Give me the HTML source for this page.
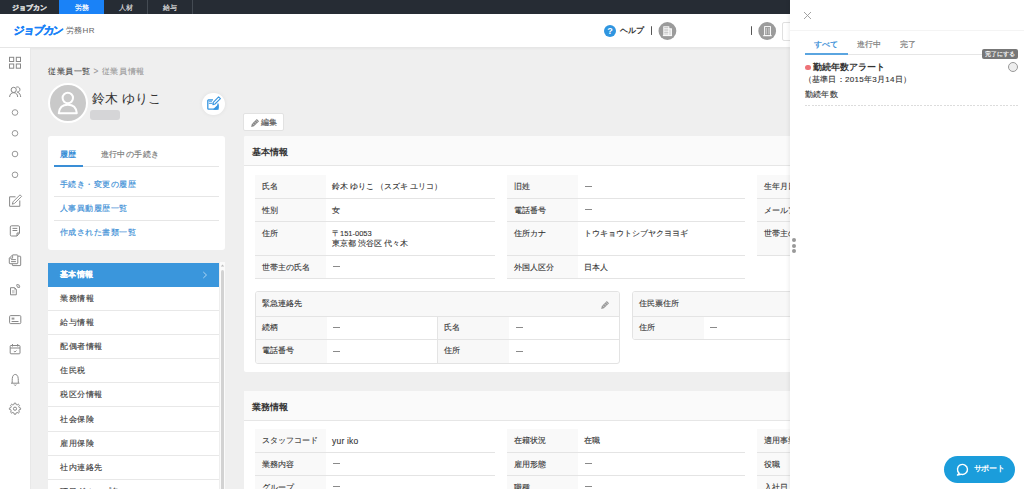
<!DOCTYPE html>
<html><head><meta charset="utf-8"><style>
*{box-sizing:border-box;margin:0;padding:0}
html,body{width:1024px;height:489px;overflow:hidden;background:#efefef;font-family:"Liberation Sans",sans-serif;color:#333}
.a{position:absolute}
.tt{top:0;height:14px;color:#ddd;font-size:7px;line-height:15px;text-align:center;-webkit-text-stroke:0.2px currentColor}
.card{background:#fff;border-radius:3px}
.lnk{color:#3a8ed6;font-size:8px;letter-spacing:0.45px;white-space:nowrap;-webkit-text-stroke:0.15px #3a8ed6}
.nav{left:48px;width:171px;height:24px;background:#fff;border-bottom:1px solid #e8e8e8;font-size:8px;letter-spacing:0.5px;line-height:24px;padding-left:12px;color:#3a3a3a;white-space:nowrap;-webkit-text-stroke:0.12px #3a3a3a}
.t{position:absolute;font-size:7.5px;color:#333;white-space:nowrap;line-height:10px;-webkit-text-stroke:0.1px #333}
.ln{position:absolute;height:1px;background:#e4e4e4}
.lb{position:absolute;background:#f9f9f9}
</style></head><body>
<div class="a" style="left:0;top:0;width:1024px;height:14px;background:#262c34"></div>
<div class="a tt" style="left:0;width:59px;color:#d5d5d5;font-weight:bold;font-size:7px;letter-spacing:-0.1px;-webkit-text-stroke:0.35px #d5d5d5">ジョブカン</div>
<div class="a tt" style="left:59px;width:45px;background:#1a82f7;color:#fff">労務</div>
<div class="a tt" style="left:104px;width:43px">人材</div>
<div class="a" style="left:147px;top:0;width:1px;height:14px;background:#444b53"></div>
<div class="a tt" style="left:148px;width:44px">給与</div>
<div class="a" style="left:192px;top:0;width:1px;height:14px;background:#444b53"></div>
<div class="a" style="left:0;top:14px;width:1024px;height:34px;background:#fff;border-bottom:1px solid #e6e6e6;box-shadow:0 1px 2px rgba(0,0,0,.04)"></div>
<div class="a" style="left:13px;top:23px;font-size:11px;line-height:14px;font-weight:bold;color:#1a82f7;letter-spacing:-1.3px;white-space:nowrap;transform:skewX(-8deg);transform-origin:0 100%;-webkit-text-stroke:0.3px #1a82f7">ジョブカン</div>
<div class="a" style="left:66px;top:26px;font-size:8px;line-height:10px;color:#666;letter-spacing:0.3px;white-space:nowrap">労務HR</div>
<div class="a" style="left:604px;top:25px;width:12px;height:12px;border-radius:50%;background:#2f95e0;color:#fff;font-size:9px;font-weight:bold;text-align:center;line-height:12px">?</div>
<div class="a" style="left:619.5px;top:25.5px;font-size:8px;line-height:10px;font-weight:bold;color:#333;white-space:nowrap;letter-spacing:0.1px">ヘルプ</div>
<div class="a" style="left:651px;top:26px;width:1.4px;height:9.3px;background:#555;border-radius:0.7px"></div>
<svg class="a" style="left:655px;top:19px" width="25" height="25" viewBox="655 19 25 25"><circle cx="667.4" cy="31" r="8.9" fill="#9b9b9b"/><rect x="663.3" y="26.3" width="6" height="9.4" fill="#fff"/><rect x="669" y="28.3" width="2.9" height="7.4" fill="#fff"/><path d="M664.2 27.6H668.4M664.2 29.2H668.4M664.2 30.8H668.4M664.2 32.4H668.4M664.2 34H668.4M670 29.3V35.2" stroke="#b5b5b5" stroke-width="0.8"/><rect x="662.8" y="35.2" width="9.3" height="0.9" fill="#fff"/></svg>
<div class="a" style="left:750.8px;top:25.8px;width:1.4px;height:9.3px;background:#555;border-radius:0.7px"></div>
<svg class="a" style="left:755px;top:19px" width="25" height="25" viewBox="755 19 25 25"><circle cx="767.2" cy="31" r="8.9" fill="#9b9b9b"/><rect x="764.6" y="26.6" width="5.9" height="9" fill="none" stroke="#fff" stroke-width="0.9"/><path d="M766.3 28V34.3M768.9 28V34.3" stroke="#ddd" stroke-width="0.8"/><rect x="762.9" y="35.3" width="9" height="0.9" fill="#fff"/></svg>
<div class="a" style="left:782px;top:21.5px;width:20px;height:19.5px;border:1px solid #e0e0e0;border-radius:2px;background:#fff"></div>
<div class="a" style="left:0;top:48px;width:31px;height:441px;background:#fff;border-right:1px solid #e8e8e8"></div>
<svg class="a" style="left:0;top:47px" width="30" height="442" viewBox="0 47 30 442" fill="none" stroke="#888" stroke-width="1"><rect x="9.5" y="57.3" width="4.2" height="4.2"/><rect x="16.3" y="57.3" width="4.2" height="4.2"/><rect x="9.5" y="64" width="4.2" height="4.2"/><rect x="16.3" y="64" width="4.2" height="4.2"/><circle cx="13.7" cy="89.9" r="2.6"/><path d="M9.6 97 C9.8 94 11.4 92.7 13.7 92.7 C16 92.7 17.5 94 17.7 97"/><path d="M16.2 87.2 A2.6 2.6 0 1 1 17 92.1 M17.6 92.3 C19.4 92.8 20.5 94.5 20.7 97"/><circle cx="15" cy="112.5" r="2.8" stroke="#999"/><circle cx="15" cy="133.3" r="2.8" stroke="#999"/><circle cx="15" cy="154" r="2.8" stroke="#999"/><circle cx="15" cy="174.8" r="2.8" stroke="#999"/><path d="M15.5 196.8H9.6V206.3H19.8V200.5"/><path d="M20.02 194.82 L21.58 196.38 L14.58 203.38 L12.3 204.2 L13.02 201.82 Z" stroke-width="0.9" stroke-linejoin="round"/><path d="M11.5 225.8H18.3A1.2 1.2 0 0 1 19.5 227V233L17 236H11.5A1.2 1.2 0 0 1 10.3 234.8V227A1.2 1.2 0 0 1 11.5 225.8Z"/><path d="M12.5 228.4H17.3M12.5 230.5H17.3"/><path d="M19.5 233H17V236"/><path d="M12.6 254.9H17.1A0.7 0.7 0 0 1 17.8 255.6V263A0.7 0.7 0 0 1 17.1 263.7H10A0.7 0.7 0 0 1 9.3 263V258.2Z" stroke-linejoin="round"/><path d="M12.6 255.2V258.2H9.6" stroke-width="0.9"/><path d="M11.1 259.6H15.9M11.1 261.6H15.9"/><path d="M18 256.2H20.1A0.6 0.6 0 0 1 20.7 256.8V265A0.6 0.6 0 0 1 20.1 265.6H12.9A0.6 0.6 0 0 1 12.3 265V263.9"/><path d="M10.5 287.7H14.6L16.3 289.4V294.8H10.5Z" stroke-linejoin="round"/><path d="M14.4 287.6V289.6H16.4Z" fill="#888" stroke="none"/><rect x="12" y="290" width="2.6" height="3.4" fill="#d0d0d0" stroke="none"/><ellipse cx="18.2" cy="286" rx="1.8" ry="1.1" transform="rotate(45 18.2 286)" stroke="#999"/><circle cx="18.2" cy="286" r="0.5" fill="#aaa" stroke="none"/><rect x="9.6" y="315.6" width="11.2" height="8" rx="1"/><rect x="11.6" y="317.6" width="2.8" height="2" fill="#999" stroke="none"/><path d="M11.6 321.5H18.5"/><rect x="10.2" y="345.5" width="9.8" height="8.3" rx="0.8"/><path d="M10.2 348H20M12.5 344V346.5M17.7 344V346.5"/><path d="M13.8 351.2L15 352 L16.5 350.5" stroke-width="0.9"/><path d="M11 383.2H19.5M12.2 383C12.2 380 12 376.5 13.5 375.2C14.5 374.2 16 374.2 17 375.2C18.5 376.5 18.3 380 18.3 383"/><path d="M14.2 384.6A1.1 1.1 0 0 0 16.3 384.6" /><circle cx="15" cy="408.7" r="1.6"/><path d="M20.60 408.70 L20.55 409.43 L19.15 409.81 L18.97 410.35 L18.72 410.85 L19.44 412.11 L18.96 412.66 L18.41 413.14 L17.15 412.42 L16.65 412.67 L16.11 412.85 L15.73 414.25 L15.00 414.30 L14.27 414.25 L13.89 412.85 L13.35 412.67 L12.85 412.42 L11.59 413.14 L11.04 412.66 L10.56 412.11 L11.28 410.85 L11.03 410.35 L10.85 409.81 L9.45 409.43 L9.40 408.70 L9.45 407.97 L10.85 407.59 L11.03 407.05 L11.28 406.55 L10.56 405.29 L11.04 404.74 L11.59 404.26 L12.85 404.98 L13.35 404.73 L13.89 404.55 L14.27 403.15 L15.00 403.10 L15.73 403.15 L16.11 404.55 L16.65 404.73 L17.15 404.98 L18.41 404.26 L18.96 404.74 L19.44 405.29 L18.72 406.55 L18.97 407.05 L19.15 407.59 L20.55 407.97Z" stroke-linejoin="round"/></svg>
<div class="a" style="left:48px;top:65.5px;font-size:8.3px;letter-spacing:0.55px;color:#444;white-space:nowrap;-webkit-text-stroke:0.1px #444">従業員一覧 <span style="color:#999;-webkit-text-stroke:0.1px #999">&gt; 従業員情報</span></div>
<div class="a" style="left:48px;top:83px;width:40px;height:40px;border-radius:50%;background:#c9c9c9;border:2px solid #fff"></div>
<svg class="a" style="left:48px;top:83px" width="40" height="40" viewBox="0 0 40 40" fill="none" stroke="#fff" stroke-width="2"><circle cx="19.8" cy="15" r="5.2"/><path d="M10.8 30.2C11.3 24.5 14.8 21.8 19.8 21.8C24.8 21.8 28.3 24.5 28.8 30.2Z" stroke-linejoin="round"/></svg>
<div class="a" style="left:92px;top:89.5px;font-size:13px;color:#333;white-space:nowrap">鈴木 ゆりこ</div>
<div class="a" style="left:89.8px;top:110px;width:30.5px;height:9.7px;border-radius:3px;background:#d5d5d7;filter:blur(0.4px)"></div>
<div class="a" style="left:202px;top:92.5px;width:22.6px;height:22.6px;border-radius:50%;background:#fff;box-shadow:0 0 4px rgba(0,0,0,.07)"></div>
<svg class="a" style="left:200px;top:90px" width="28" height="28" viewBox="200 90 28 28" fill="none" stroke="#3796e0" stroke-width="1.3" stroke-linejoin="round"><path d="M218 103.5V107.8L216 109.2H208.5A0.8 0.8 0 0 1 207.8 108.5V100.5A0.8 0.8 0 0 1 208.5 99.8H213"/><path d="M214 109.2L218 105.5V109.2Z" fill="#3796e0"/><path d="M208.8 101.2H212M208.8 103.3H212.5" stroke-width="1"/><path d="M218.6 96.8L220.4 98.6L215 104L212.9 104.6L213.3 102.4Z" stroke-width="1.1"/></svg>
<div class="a" style="left:243px;top:112.5px;width:40.5px;height:18px;border:1px solid #e2e2e2;border-radius:2px;background:#fff"></div>
<div class="t" style="left:260.5px;top:118px;font-size:7.5px;color:#555;-webkit-text-stroke:0.15px #555">編集</div>
<svg class="a" style="left:250px;top:118px" width="10" height="10" viewBox="0 0 10 10"><path d="M6.8 0.9L9.1 3.2L4 8.3L1.2 9.1L1.8 6Z" fill="#888"/><path d="M2.6 5.4L4.6 7.4M4.3 3.7L6.3 5.7M5.9 2.2L7.9 4.2" stroke="#fff" stroke-width="0.5"/></svg>
<div class="a card" style="left:48px;top:136px;width:177px;height:114px"></div>
<div class="a" style="left:60px;top:149px;font-size:8px;letter-spacing:0.45px;color:#3a8ed6;white-space:nowrap;font-weight:bold">履歴</div>
<div class="a" style="left:100.5px;top:149px;font-size:8px;letter-spacing:0.45px;color:#777;white-space:nowrap;-webkit-text-stroke:0.15px #777">進行中の手続き</div>
<div class="a" style="left:54px;top:166px;width:165px;height:1px;background:#e6e6e6"></div>
<div class="a" style="left:54px;top:165px;width:29px;height:2px;background:#3a8ed6"></div>
<div class="a lnk" style="left:60px;top:179px">手続き・変更の履歴</div>
<div class="a" style="left:54px;top:196px;width:165px;height:1px;background:#e6e6e6"></div>
<div class="a lnk" style="left:60px;top:203px">人事異動履歴一覧</div>
<div class="a" style="left:54px;top:220px;width:165px;height:1px;background:#e6e6e6"></div>
<div class="a lnk" style="left:60px;top:227px">作成された書類一覧</div>
<div class="a nav" style="top:263px;background:#3a96dc;color:#fff;font-weight:bold;border-bottom:none;-webkit-text-stroke:0.1px #fff;letter-spacing:0.3px">基本情報</div>
<svg class="a" style="left:202px;top:271px" width="6" height="8" viewBox="0 0 6 8"><path d="M1.3 1L4.5 4L1.3 7" stroke="#b9dbf5" stroke-width="0.9" fill="none"/></svg>
<div class="a nav" style="top:287px;height:24px;line-height:24px">業務情報</div>
<div class="a nav" style="top:311px;height:24px;line-height:24px">給与情報</div>
<div class="a nav" style="top:335px;height:24px;line-height:24px">配偶者情報</div>
<div class="a nav" style="top:359px;height:24px;line-height:24px">住民税</div>
<div class="a nav" style="top:383px;height:24px;line-height:24px">税区分情報</div>
<div class="a nav" style="top:407px;height:25px;line-height:25px">社会保険</div>
<div class="a nav" style="top:432px;height:24px;line-height:24px">雇用保険</div>
<div class="a nav" style="top:456px;height:24px;line-height:24px">社内連絡先</div>
<div class="a nav" style="top:480px;height:24px;line-height:24px">項目グループ名</div>
<div class="a" style="left:219px;top:262px;width:6px;height:227px;background:#fafafa;border-left:1px solid #eee"></div>
<svg class="a" style="left:220px;top:263px" width="5" height="5" viewBox="0 0 5 5"><path d="M0.8 3.6L2.5 1.5L4.2 3.6Z" fill="#bbb"/></svg>
<div class="a" style="left:220.8px;top:269.5px;width:3px;height:220px;background:#d2d2d2;border-radius:1.5px"></div>
<div class="a card" style="left:244px;top:136px;width:560px;height:236px;border-radius:2px"></div>
<div class="a" style="left:244px;top:136px;width:560px;height:30px;background:#fafafa;border-bottom:1px solid #e6e6e6;border-radius:2px 2px 0 0"></div>
<div class="a" style="left:252px;top:146px;font-size:9px;font-weight:bold;color:#333;white-space:nowrap">基本情報</div>
<div class="lb" style="left:255px;top:175px;width:71px;height:24px"></div>
<div class="t" style="left:261.5px;top:182.0px">氏名</div>
<div class="t" style="left:332px;top:182.0px">鈴木 ゆりこ （スズキ ユリコ）</div>
<div class="ln" style="left:255px;top:198px;width:240px"></div>
<div class="lb" style="left:255px;top:199px;width:71px;height:23px"></div>
<div class="t" style="left:261.5px;top:205.5px">性別</div>
<div class="t" style="left:332px;top:205.5px">女</div>
<div class="ln" style="left:255px;top:221px;width:240px"></div>
<div class="lb" style="left:255px;top:222px;width:71px;height:34px"></div>
<div class="t" style="left:261.5px;top:229.0px">住所</div>
<div class="t" style="left:332px;top:229.0px">〒151-0053<br>東京都 渋谷区 代々木</div>
<div class="ln" style="left:255px;top:255px;width:240px"></div>
<div class="lb" style="left:255px;top:256px;width:71px;height:23px"></div>
<div class="t" style="left:261.5px;top:262.5px">世帯主の氏名</div>
<div class="a" style="left:333px;top:266.3px;width:7px;height:1px;background:#8a8a8a"></div>
<div class="ln" style="left:255px;top:278px;width:240px"></div>
<div class="lb" style="left:507px;top:175px;width:71px;height:24px"></div>
<div class="t" style="left:513.5px;top:182.0px">旧姓</div>
<div class="a" style="left:585px;top:185.8px;width:7px;height:1px;background:#8a8a8a"></div>
<div class="ln" style="left:507px;top:198px;width:238px"></div>
<div class="lb" style="left:507px;top:199px;width:71px;height:23px"></div>
<div class="t" style="left:513.5px;top:205.5px">電話番号</div>
<div class="a" style="left:585px;top:209.3px;width:7px;height:1px;background:#8a8a8a"></div>
<div class="ln" style="left:507px;top:221px;width:238px"></div>
<div class="lb" style="left:507px;top:222px;width:71px;height:34px"></div>
<div class="t" style="left:513.5px;top:229.0px">住所カナ</div>
<div class="t" style="left:584px;top:229.0px">トウキョウトシブヤクヨヨギ</div>
<div class="ln" style="left:507px;top:255px;width:238px"></div>
<div class="lb" style="left:507px;top:256px;width:71px;height:23px"></div>
<div class="t" style="left:513.5px;top:262.5px">外国人区分</div>
<div class="t" style="left:584px;top:262.5px">日本人</div>
<div class="ln" style="left:507px;top:278px;width:238px"></div>
<div class="lb" style="left:757px;top:175px;width:71px;height:24px"></div>
<div class="t" style="left:763.5px;top:182.0px">生年月日</div>
<div class="ln" style="left:757px;top:198px;width:238px"></div>
<div class="lb" style="left:757px;top:199px;width:71px;height:23px"></div>
<div class="t" style="left:763.5px;top:205.5px">メールアドレス</div>
<div class="ln" style="left:757px;top:221px;width:238px"></div>
<div class="lb" style="left:757px;top:222px;width:71px;height:34px"></div>
<div class="t" style="left:763.5px;top:229.0px">世帯主の続柄</div>
<div class="ln" style="left:757px;top:255px;width:238px"></div>
<div class="a" style="left:255px;top:291px;width:365px;height:73px;border:1px solid #e3e3e3;border-radius:3px;overflow:hidden;background:#fff"><div class="a" style="left:0;top:0;width:100%;height:25px;background:#f8f8f8;border-bottom:1px solid #e4e4e4"></div><div class="a" style="left:0;top:25px;width:71px;height:46px;background:#f8f8f8"></div><div class="a" style="left:181px;top:25px;width:72px;height:46px;background:#f8f8f8;border-left:1px solid #e4e4e4"></div><div class="a" style="left:0;top:47px;width:100%;height:1px;background:#e4e4e4"></div></div>
<div class="t" style="left:262px;top:299px">緊急連絡先</div>
<svg class="a" style="left:600px;top:300px" width="10" height="10" viewBox="0 0 10 10"><path d="M6.8 0.9L9.1 3.2L4 8.3L1.2 9.1L1.8 6Z" fill="#999"/><path d="M2.6 5.4L4.6 7.4M4.3 3.7L6.3 5.7M5.9 2.2L7.9 4.2" stroke="#fff" stroke-width="0.5"/></svg>
<div class="t" style="left:262px;top:323px">続柄</div><div class="a" style="left:333px;top:327px;width:7px;height:1px;background:#8a8a8a"></div>
<div class="t" style="left:444px;top:323px">氏名</div><div class="a" style="left:515.5px;top:327px;width:7px;height:1px;background:#8a8a8a"></div>
<div class="t" style="left:262px;top:346px">電話番号</div><div class="a" style="left:333px;top:350.5px;width:7px;height:1px;background:#8a8a8a"></div>
<div class="t" style="left:444px;top:346px">住所</div><div class="a" style="left:515.5px;top:350.5px;width:7px;height:1px;background:#8a8a8a"></div>
<div class="a" style="left:632px;top:291px;width:200px;height:49px;border:1px solid #e3e3e3;border-radius:3px;overflow:hidden;background:#fff"><div class="a" style="left:0;top:0;width:100%;height:25px;background:#f8f8f8;border-bottom:1px solid #e4e4e4"></div><div class="a" style="left:0;top:25px;width:71px;height:23px;background:#f8f8f8"></div></div>
<div class="t" style="left:639px;top:299px">住民票住所</div>
<div class="t" style="left:639px;top:323px">住所</div><div class="a" style="left:710px;top:327px;width:7px;height:1px;background:#8a8a8a"></div>
<div class="a card" style="left:244px;top:391px;width:560px;height:120px;border-radius:2px"></div>
<div class="a" style="left:244px;top:391px;width:560px;height:30px;background:#fafafa;border-bottom:1px solid #e6e6e6"></div>
<div class="a" style="left:252px;top:401px;font-size:9px;font-weight:bold;color:#333;white-space:nowrap">業務情報</div>
<div class="lb" style="left:255px;top:429px;width:71px;height:24px"></div>
<div class="t" style="left:261.5px;top:436.0px">スタッフコード</div>
<div class="t" style="left:332px;top:436.0px"><span style="font-size:8.5px;letter-spacing:0.2px">yur iko</span></div>
<div class="ln" style="left:255px;top:452px;width:240px"></div>
<div class="lb" style="left:255px;top:453px;width:71px;height:23px"></div>
<div class="t" style="left:261.5px;top:459.5px">業務内容</div>
<div class="a" style="left:333px;top:463.3px;width:7px;height:1px;background:#8a8a8a"></div>
<div class="ln" style="left:255px;top:475px;width:240px"></div>
<div class="lb" style="left:255px;top:476px;width:71px;height:23px"></div>
<div class="t" style="left:261.5px;top:482.5px">グループ</div>
<div class="a" style="left:333px;top:486.3px;width:7px;height:1px;background:#8a8a8a"></div>
<div class="ln" style="left:255px;top:498px;width:240px"></div>
<div class="lb" style="left:507px;top:429px;width:71px;height:24px"></div>
<div class="t" style="left:513.5px;top:436.0px">在籍状況</div>
<div class="t" style="left:584px;top:436.0px">在職</div>
<div class="ln" style="left:507px;top:452px;width:238px"></div>
<div class="lb" style="left:507px;top:453px;width:71px;height:23px"></div>
<div class="t" style="left:513.5px;top:459.5px">雇用形態</div>
<div class="a" style="left:585px;top:463.3px;width:7px;height:1px;background:#8a8a8a"></div>
<div class="ln" style="left:507px;top:475px;width:238px"></div>
<div class="lb" style="left:507px;top:476px;width:71px;height:23px"></div>
<div class="t" style="left:513.5px;top:482.5px">職種</div>
<div class="a" style="left:585px;top:486.3px;width:7px;height:1px;background:#8a8a8a"></div>
<div class="ln" style="left:507px;top:498px;width:238px"></div>
<div class="lb" style="left:757px;top:429px;width:71px;height:24px"></div>
<div class="t" style="left:763.5px;top:436.0px">適用事業所</div>
<div class="ln" style="left:757px;top:452px;width:238px"></div>
<div class="lb" style="left:757px;top:453px;width:71px;height:23px"></div>
<div class="t" style="left:763.5px;top:459.5px">役職</div>
<div class="ln" style="left:757px;top:475px;width:238px"></div>
<div class="lb" style="left:757px;top:476px;width:71px;height:23px"></div>
<div class="t" style="left:763.5px;top:482.5px">入社日</div>
<div class="ln" style="left:757px;top:498px;width:238px"></div>
<div class="a" style="left:789.5px;top:0;width:235px;height:489px;background:#fff;box-shadow:-1px 0 4px rgba(0,0,0,.08)"></div>
<svg class="a" style="left:803px;top:11px" width="9" height="9" viewBox="0 0 9 9"><path d="M1 1L8 8M8 1L1 8" stroke="#999" stroke-width="0.9" fill="none"/></svg>
<div class="a" style="left:790px;top:30px;width:234px;height:1px;background:#f4f4f4"></div>
<div class="a" style="left:813.5px;top:38.5px;font-size:8px;letter-spacing:0.3px;color:#3a8fd8;white-space:nowrap;-webkit-text-stroke:0.25px #3a8fd8">すべて</div>
<div class="a" style="left:856.5px;top:38.5px;font-size:8px;letter-spacing:0.3px;color:#777;white-space:nowrap;-webkit-text-stroke:0.15px #777">進行中</div>
<div class="a" style="left:899.5px;top:38.5px;font-size:8px;letter-spacing:0.3px;color:#777;white-space:nowrap;-webkit-text-stroke:0.15px #777">完了</div>
<div class="a" style="left:805px;top:54px;width:213px;height:1px;background:#e6e6e6"></div>
<div class="a" style="left:805px;top:53px;width:43px;height:2px;background:#5aa5e0"></div>
<div class="a" style="left:982px;top:49px;width:36px;height:10px;border-radius:2px;background:#777;color:#fff;font-size:5.5px;line-height:10px;text-align:center;white-space:nowrap;-webkit-text-stroke:0.15px #fff;letter-spacing:0.2px">完了にする</div>
<div class="a" style="left:1008px;top:62px;width:10px;height:10px;border-radius:50%;background:#eee;border:1px solid #999"></div>
<div class="a" style="left:805px;top:64.5px;width:5.5px;height:5.5px;border-radius:50%;background:#ee7378"></div>
<div class="a" style="left:813px;top:61px;font-size:9px;font-weight:bold;color:#333;white-space:nowrap">勤続年数アラート</div>
<div class="a" style="left:803.5px;top:73.5px;font-size:8px;letter-spacing:0.3px;color:#333;white-space:nowrap;-webkit-text-stroke:0.12px #333">（基準日：2015年3月14日）</div>
<div class="a" style="left:805px;top:88.5px;font-size:8px;letter-spacing:0.2px;color:#333;white-space:nowrap;-webkit-text-stroke:0.12px #333">勤続年数</div>
<div class="a" style="left:805px;top:105px;width:213px;height:1px;background:repeating-linear-gradient(90deg,#dcdcdc 0 2px,transparent 2px 3.3px)"></div>
<div class="a" style="left:792px;top:238px;width:4px;height:4px;border-radius:50%;background:#999"></div>
<div class="a" style="left:792px;top:243.5px;width:4px;height:4px;border-radius:50%;background:#999"></div>
<div class="a" style="left:792px;top:249px;width:4px;height:4px;border-radius:50%;background:#999"></div>
<div class="a" style="left:943.5px;top:455.5px;width:71px;height:27.5px;border-radius:14px;background:#1b9ddb"></div>
<svg class="a" style="left:956px;top:462px" width="13" height="14" viewBox="0 0 13 14"><path d="M3.2 11.2A5 5 0 1 1 5 12.2L1.5 13Z" stroke="#fff" stroke-width="1.4" fill="none" stroke-linejoin="round"/></svg>
<div class="a" style="left:973.5px;top:464px;font-size:7.5px;font-weight:bold;color:#fff;white-space:nowrap;letter-spacing:-0.2px;line-height:10px">サポート</div>
</body></html>
